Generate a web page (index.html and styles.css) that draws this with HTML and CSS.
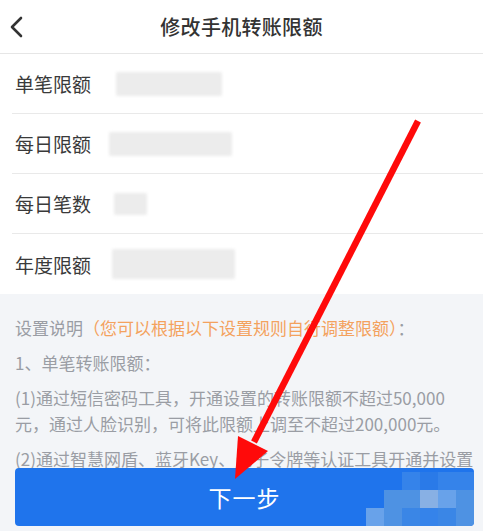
FILE: index.html
```html
<!DOCTYPE html>
<html lang="zh-CN">
<head>
    <meta charset="UTF-8">
    <meta name="viewport" content="width=device-width, initial-scale=1.0">
    <title>修改手机转账限额</title>
    <link rel="stylesheet" href="styles.css">
</head>
<body>
    <header class="header">
        <svg class="back-icon" width="24" height="24" viewBox="0 0 24 24">
            <path d="M14 3 L5 12 L14 21" fill="none" stroke="#333" stroke-width="2.6" stroke-linecap="round" stroke-linejoin="round"/>
        </svg>
        <h1 class="header-title">修改手机转账限额</h1>
    </header>

    <div class="limit-list">
        <div class="limit-row">
            <span class="limit-label">单笔限额</span>
            <span class="limit-value value-single"></span>
        </div>
        <div class="limit-row">
            <span class="limit-label">每日限额</span>
            <span class="limit-value value-daily"></span>
        </div>
        <div class="limit-row">
            <span class="limit-label">每日笔数</span>
            <span class="limit-value value-count"></span>
        </div>
        <div class="limit-row">
            <span class="limit-label">年度限额</span>
            <span class="limit-value value-year"></span>
        </div>
    </div>

    <section class="notes">
        <p>设置说明<span class="notes-hint">（您可以根据以下设置规则自行调整限额）</span>：</p>
        <p>1、单笔转账限额：</p>
        <p>(1)通过短信密码工具，开通设置的转账限额不超过50,000<br>元，通过人脸识别，可将此限额上调至不超过200,000元。</p>
        <p>(2)通过智慧网盾、蓝牙Key、电子令牌等认证工具开通并设置</p>
    </section>

    <div class="footer-bar">
        <button class="next-button">下一步</button>
        <div class="mosaic">
            <span></span><span></span><span class="m3"></span><span class="m1"></span><span class="m3"></span><span class="m3"></span>
            <span></span><span class="m4"></span><span class="m4"></span><span class="m6"></span><span class="m5"></span><span class="m4"></span>
            <span class="m5"></span><span class="m4"></span><span class="m2"></span><span class="m3"></span><span class="m2"></span><span class="m4"></span>
        </div>
    </div>

    <svg class="arrow" width="483" height="531" viewBox="0 0 483 531">
        <line x1="418" y1="121" x2="254" y2="442" stroke="#ff0a0a" stroke-width="6.5"/>
        <polygon points="235,479 238,436 268,451" fill="#ff0a0a"/>
    </svg>
</body>
</html>
```

FILE: styles.css
```css
/* Base */
* {
    margin: 0;
    padding: 0;
    box-sizing: border-box;
}

body {
    font-family: "Noto Sans CJK SC", "Noto Sans", sans-serif;
    width: 483px;
    height: 531px;
    overflow: hidden;
    background-color: #f3f5f8;
    color: #333;
    position: relative;
}

/* Header */
.header {
    height: 54px;
    background-color: white;
    border-bottom: 1px solid #e6e6e6;
    display: flex;
    align-items: center;
    justify-content: center;
    position: relative;
}

.back-icon {
    position: absolute;
    left: 7px;
    top: 15px;
}

.header-title {
    font-size: 20px;
    font-weight: 500;
    color: #333;
    letter-spacing: 0.3px;
}

/* Limit list */
.limit-list {
    background-color: white;
    padding-left: 12px;
}

.limit-row {
    height: 60px;
    display: flex;
    align-items: center;
    padding-left: 3px;
    border-bottom: 1px solid #e9e9e9;
}

.limit-row:last-child {
    border-bottom: none;
}

.limit-label {
    font-size: 19px;
    color: #3a3a3a;
    width: 76px;
}

.limit-value {
    display: block;
    background-color: #ececec;
    border-radius: 2px;
    filter: blur(1.5px);
}

.value-single { margin-left: 25px; width: 106px; height: 24px; }
.value-daily  { margin-left: 18px; width: 123px; height: 24px; }
.value-count  { margin-left: 23px; width: 33px;  height: 22px; }
.value-year   { margin-left: 21px; width: 123px; height: 30px; }

/* Notes */
.notes {
    padding: 21px 10px 0 15px;
    font-size: 17px;
    line-height: 26px;
    color: #9a9da4;
    white-space: nowrap;
}

.notes p {
    margin-bottom: 9px;
}

.notes-hint {
    color: #f3a25e;
}

/* Footer button */
.footer-bar {
    position: absolute;
    left: 15px;
    top: 468px;
    width: 459px;
    height: 58px;
}

.next-button {
    width: 100%;
    height: 100%;
    border: none;
    border-radius: 4px;
    background-color: #1f74ec;
    color: white;
    font-family: inherit;
    font-size: 23px;
    letter-spacing: 1px;
}

.mosaic {
    position: absolute;
    right: 0;
    top: 4px;
    display: grid;
    grid-template-columns: repeat(6, 18px);
    grid-template-rows: repeat(3, 18px);
    border-radius: 0 0 4px 0;
    overflow: hidden;
}

.mosaic span { background-color: #1f74ec; }
.mosaic .m1 { background-color: #2a7ae8; }
.mosaic .m2 { background-color: #3a86e6; }
.mosaic .m3 { background-color: #3583ea; }
.mosaic .m4 { background-color: #4e92e3; }
.mosaic .m5 { background-color: #68a2ea; }
.mosaic .m6 { background-color: #88b0e4; }

/* Annotation arrow */
.arrow {
    position: absolute;
    left: 0;
    top: 0;
    pointer-events: none;
}
```
